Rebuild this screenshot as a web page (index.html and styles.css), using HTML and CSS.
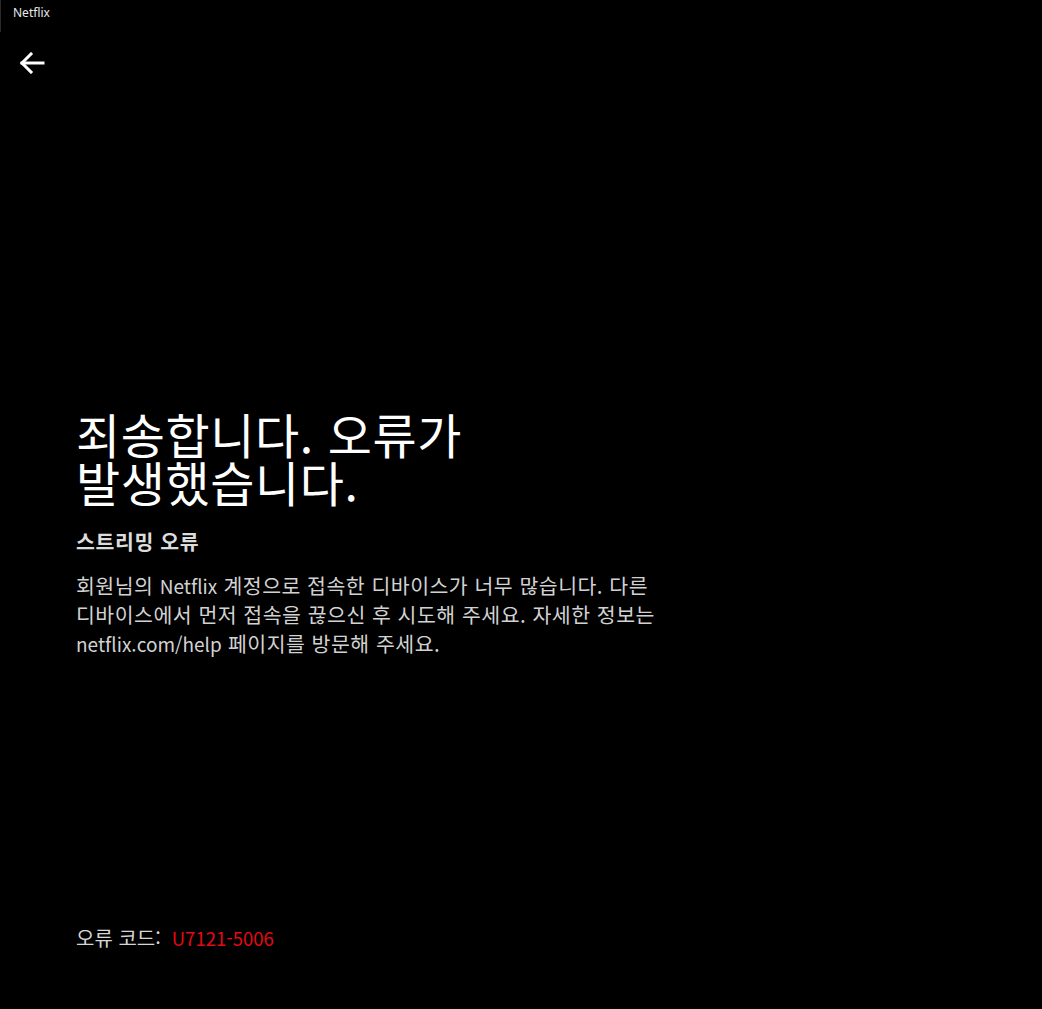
FILE: index.html
```html
<!DOCTYPE html>
<html lang="ko">
<head>
<meta charset="utf-8">
<title>Netflix</title>
<link rel="stylesheet" href="styles.css">
</head>
<body>
<div class="app">
  <header class="titlebar"><span class="title">Netflix</span></header>
  <div class="nav">
    <button class="back" aria-label="뒤로">
      <svg width="26" height="22" viewBox="0 0 26 22" fill="none" stroke="#fff" stroke-width="3" stroke-linecap="square">
        <path d="M3 11 H24"/>
        <path d="M12 2 L3 11 L12 20"/>
      </svg>
    </button>
  </div>
  <main class="content">
    <div class="message">
      <h1 class="heading">죄송합니다. 오류가 발생했습니다.</h1>
      <h2 class="subheading">스트리밍 오류</h2>
      <p class="body">회원님의 <span class="latin">Netflix</span> 계정으로 접속한 디바이스가 너무 많습니다. 다른 디바이스에서 먼저 접속을 끊으신 후 시도해 주세요. 자세한 정보는 <span class="latin">netflix.com/help</span> 페이지를 방문해 주세요.</p>
    </div>
  </main>
  <footer class="footer">
    <span class="code-label">오류 코드:</span><span class="code">U7121-5006</span>
  </footer>
</div>
</body>
</html>
```

FILE: styles.css
```css
* { box-sizing: border-box; }
html, body {
  margin: 0;
  padding: 0;
  background: #000;
  height: 100%;
}
body {
  font-family: "Noto Sans CJK KR", "Noto Sans", sans-serif;
  color: #fff;
  word-break: keep-all;
}
.app {
  height: 100vh;
  display: flex;
  flex-direction: column;
}
.titlebar {
  height: 32px;
  display: flex;
  align-items: flex-start;
  padding: 5px 0 0 12px;
  border-left: 1px solid #2a2a2a;
  background: #000;
}
.title {
  font-family: "Noto Sans", "Noto Sans CJK KR", sans-serif;
  font-size: 12px;
  color: #e8e8e8;
  line-height: 16px;
}
.nav {
  padding: 20px 0 0 19px;
}
.back {
  background: none;
  border: 0;
  padding: 0;
  width: 26px;
  height: 22px;
  display: block;
  cursor: pointer;
}
.back svg { display: block; }
.content {
  flex: 1;
  display: flex;
  align-items: center;
  padding: 0 76px;
}
.message {
  max-width: 600px;
  padding-top: 68px;
}
.heading {
  margin: 0;
  max-width: 440px;
  font-size: 48px;
  font-weight: 400;
  line-height: 48px;
  letter-spacing: 0.6px;
  color: #fff;
}
.subheading {
  margin: 23px 0 0;
  font-size: 20.5px;
  font-weight: 700;
  line-height: 26px;
  letter-spacing: 0.6px;
  color: #dcdcdc;
}
.body {
  margin: 17px 0 0;
  font-size: 20.5px;
  line-height: 29px;
  letter-spacing: 0.5px;
  color: #d2d2d2;
}
.latin {
  font-size: 19px;
  letter-spacing: 0;
}
.footer {
  padding: 0 76px 58px;
  font-size: 20px;
  line-height: 26px;
  color: #d6d6d6;
}
.code {
  margin-left: 11px;
  font-size: 18.5px;
  color: #e50914;
}
```
